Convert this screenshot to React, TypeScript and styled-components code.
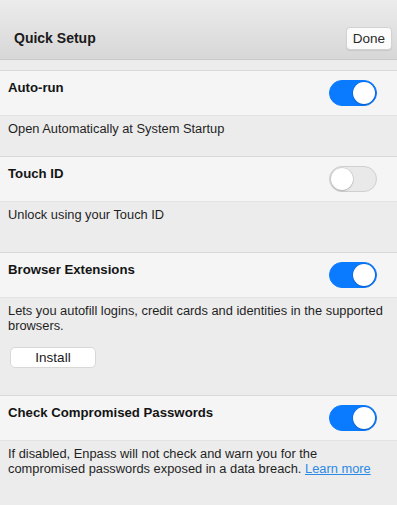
import React from "react";
import styled, { createGlobalStyle } from "styled-components";

const Global = createGlobalStyle`
  html, body { margin: 0; padding: 0; background: #ececec; }
  body { font-family: "Liberation Sans", Arial, sans-serif; color: #1d1d1d; }
`;

const Page = styled.div`
  width: 397px;
  height: 505px;
  overflow: hidden;
  background: #ececec;
  display: flex;
  flex-direction: column;
`;

const Header = styled.header`
  height: 42px;
  padding: 17px 5px 0 14px;
  border-bottom: 1px solid #c9c9c9;
  background: linear-gradient(#ececec, #d7d7d7);
  display: flex;
  align-items: center;
  justify-content: space-between;
  flex-shrink: 0;
  box-sizing: content-box;
`;

const Title = styled.h1`
  margin: 0;
  font-size: 14px;
  font-weight: bold;
  color: #1a1a1a;
`;

const DoneButton = styled.button`
  width: 46px;
  height: 23px;
  border: 1px solid #d2d2d2;
  border-radius: 4px;
  background: #fbfbfb;
  font-family: inherit;
  font-size: 13.5px;
  color: #2a2a2a;
  box-shadow: 0 1px 1px rgba(0,0,0,0.08);
  padding: 0;
`;

const Section = styled.section<{ $first?: boolean }>`
  margin-top: ${(p) => (p.$first ? "10px" : "0")};
  border-top: 1px solid #d9d9d9;
  display: flex;
  flex-direction: column;
  flex-shrink: 0;
`;

const Row = styled.div`
  height: 44px;
  background: #f5f5f5;
  border-bottom: 1px solid #e3e3e3;
  display: flex;
  justify-content: space-between;
  align-items: center;
  padding: 0 20px 0 8px;
`;

const RowTitle = styled.div`
  align-self: flex-start;
  margin-top: 9px;
  font-size: 13.2px;
  line-height: 16px;
  font-weight: bold;
  color: #141414;
`;

const Track = styled.div<{ $on: boolean }>`
  width: 48px;
  height: 26px;
  border-radius: 13px;
  box-sizing: border-box;
  background: ${(p) => (p.$on ? "#0a7aff" : "#e9e9e9")};
  border: 1px solid ${(p) => (p.$on ? "#0a7aff" : "#cfcfcf")};
  display: flex;
  align-items: center;
  justify-content: ${(p) => (p.$on ? "flex-end" : "flex-start")};
  padding: 0 1px;
`;

const Knob = styled.div`
  width: 22px;
  height: 22px;
  border-radius: 50%;
  background: #ffffff;
  box-shadow: 0 0 0 0.5px rgba(0,0,0,0.15), 0 1px 2px rgba(0,0,0,0.15);
`;

const Desc = styled.div<{ $height: number }>`
  min-height: ${(p) => p.$height}px;
  box-sizing: border-box;
  padding: 5px 8px 0;
  font-size: 12.85px;
  line-height: 15px;
  color: #1f1f1f;
`;

const InstallButton = styled.button`
  display: block;
  margin: 14px 0 0 2px;
  width: 86px;
  height: 21px;
  border: 1px solid #d8d8d8;
  border-radius: 5px;
  background: #ffffff;
  font-family: inherit;
  font-size: 13.5px;
  color: #1a1a1a;
  padding: 0;
`;

const Link = styled.a`
  color: #2a8ae6;
  text-decoration: underline;
`;

const Toggle = ({ on }: { on: boolean }) => (
  <Track $on={on}>
    <Knob />
  </Track>
);

const Setting = ({
  title,
  on,
  descHeight,
  first,
  children,
}: {
  title: string;
  on: boolean;
  descHeight: number;
  first?: boolean;
  children: React.ReactNode;
}) => (
  <Section $first={first}>
    <Row>
      <RowTitle>{title}</RowTitle>
      <Toggle on={on} />
    </Row>
    <Desc $height={descHeight}>{children}</Desc>
  </Section>
);

export default function App() {
  return (
    <Page>
      <Global />
      <Header>
        <Title>Quick Setup</Title>
        <DoneButton>Done</DoneButton>
      </Header>
      <Setting title="Auto-run" on first descHeight={40}>
        Open Automatically at System Startup
      </Setting>
      <Setting title="Touch ID" on={false} descHeight={50}>
        Unlock using your Touch ID
      </Setting>
      <Setting title="Browser Extensions" on descHeight={97}>
        Lets you autofill logins, credit cards and identities in the supported browsers.
        <InstallButton>Install</InstallButton>
      </Setting>
      <Setting title="Check Compromised Passwords" on descHeight={64}>
        <span>If disabled, Enpass will not check and warn you for the</span>
        <br />
        <span>compromised passwords exposed in a data breach.</span>{" "}
        <Link href="#">Learn more</Link>
      </Setting>
    </Page>
  );
}
